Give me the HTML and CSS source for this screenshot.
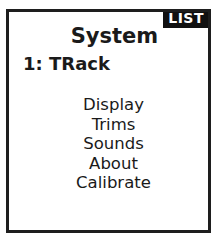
FILE: index.html
```html
<!DOCTYPE html>
<html lang="en">
<head>
  <meta charset="UTF-8">
  <title>System</title>
  <link rel="stylesheet" href="styles.css">
</head>
<body>
  <div class="screen">
    <div class="badge">LIST</div>
    <div class="title">System</div>
    <div class="model">1: TRack</div>
    <ul class="menu">
      <li>Display</li>
      <li>Trims</li>
      <li>Sounds</li>
      <li>About</li>
      <li>Calibrate</li>
    </ul>
  </div>
</body>
</html>
```

FILE: styles.css
```css
body {
  margin: 0;
  background-color: white;
  font-family: "DejaVu Sans", sans-serif;
  color: #1a1a1a;
}
.screen {
  position: relative;
  box-sizing: border-box;
  margin: 9px 0 0 6px;
  width: 205px;
  height: 224px;
  border: 3px solid #1e1e1e;
}
.badge {
  position: absolute;
  top: 0;
  right: 0;
  background-color: #111;
  color: white;
  font-weight: bold;
  font-size: 14px;
  line-height: 13px;
  padding: 0 4px 3px 5px;
  letter-spacing: 0.5px;
}
.title {
  margin-top: 12px;
  padding-left: 12px;
  text-align: center;
  font-weight: bold;
  font-size: 21px;
  line-height: 24px;
}
.model {
  margin: 6px 0 0 14px;
  font-weight: bold;
  font-size: 18px;
  line-height: 20px;
}
.menu {
  list-style: none;
  margin: 21px 0 0 0;
  padding: 0 0 0 10px;
  text-align: center;
  font-size: 16.5px;
  line-height: 19.5px;
}
```
